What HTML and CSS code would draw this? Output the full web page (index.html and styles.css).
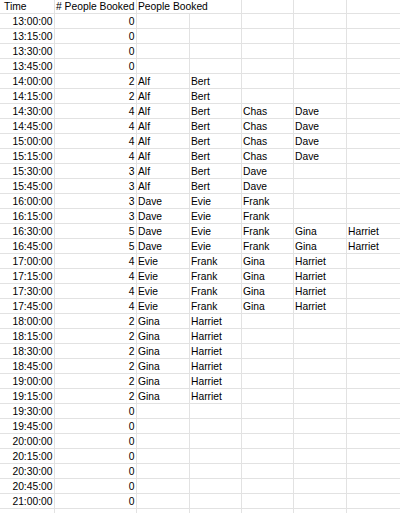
FILE: index.html
```html
<!DOCTYPE html>
<html>
<head>
<meta charset="utf-8">
<link rel="stylesheet" href="styles.css">
</head>
<body>
<table class="sheet">
<thead>
<tr class="head"><th class="l">Time</th><th class="l">&#35; People Booked</th><th class="l span2">People Booked</th><th></th><th></th><th></th></tr>
</thead>
<tbody>
<tr><td>13:00:00</td><td>0</td><td></td><td></td><td></td><td></td><td></td></tr>
<tr><td>13:15:00</td><td>0</td><td></td><td></td><td></td><td></td><td></td></tr>
<tr><td>13:30:00</td><td>0</td><td></td><td></td><td></td><td></td><td></td></tr>
<tr><td>13:45:00</td><td>0</td><td></td><td></td><td></td><td></td><td></td></tr>
<tr><td>14:00:00</td><td>2</td><td>Alf</td><td>Bert</td><td></td><td></td><td></td></tr>
<tr><td>14:15:00</td><td>2</td><td>Alf</td><td>Bert</td><td></td><td></td><td></td></tr>
<tr><td>14:30:00</td><td>4</td><td>Alf</td><td>Bert</td><td>Chas</td><td>Dave</td><td></td></tr>
<tr><td>14:45:00</td><td>4</td><td>Alf</td><td>Bert</td><td>Chas</td><td>Dave</td><td></td></tr>
<tr><td>15:00:00</td><td>4</td><td>Alf</td><td>Bert</td><td>Chas</td><td>Dave</td><td></td></tr>
<tr><td>15:15:00</td><td>4</td><td>Alf</td><td>Bert</td><td>Chas</td><td>Dave</td><td></td></tr>
<tr><td>15:30:00</td><td>3</td><td>Alf</td><td>Bert</td><td>Dave</td><td></td><td></td></tr>
<tr><td>15:45:00</td><td>3</td><td>Alf</td><td>Bert</td><td>Dave</td><td></td><td></td></tr>
<tr><td>16:00:00</td><td>3</td><td>Dave</td><td>Evie</td><td>Frank</td><td></td><td></td></tr>
<tr><td>16:15:00</td><td>3</td><td>Dave</td><td>Evie</td><td>Frank</td><td></td><td></td></tr>
<tr><td>16:30:00</td><td>5</td><td>Dave</td><td>Evie</td><td>Frank</td><td>Gina</td><td>Harriet</td></tr>
<tr><td>16:45:00</td><td>5</td><td>Dave</td><td>Evie</td><td>Frank</td><td>Gina</td><td>Harriet</td></tr>
<tr><td>17:00:00</td><td>4</td><td>Evie</td><td>Frank</td><td>Gina</td><td>Harriet</td><td></td></tr>
<tr><td>17:15:00</td><td>4</td><td>Evie</td><td>Frank</td><td>Gina</td><td>Harriet</td><td></td></tr>
<tr><td>17:30:00</td><td>4</td><td>Evie</td><td>Frank</td><td>Gina</td><td>Harriet</td><td></td></tr>
<tr><td>17:45:00</td><td>4</td><td>Evie</td><td>Frank</td><td>Gina</td><td>Harriet</td><td></td></tr>
<tr><td>18:00:00</td><td>2</td><td>Gina</td><td>Harriet</td><td></td><td></td><td></td></tr>
<tr><td>18:15:00</td><td>2</td><td>Gina</td><td>Harriet</td><td></td><td></td><td></td></tr>
<tr><td>18:30:00</td><td>2</td><td>Gina</td><td>Harriet</td><td></td><td></td><td></td></tr>
<tr><td>18:45:00</td><td>2</td><td>Gina</td><td>Harriet</td><td></td><td></td><td></td></tr>
<tr><td>19:00:00</td><td>2</td><td>Gina</td><td>Harriet</td><td></td><td></td><td></td></tr>
<tr><td>19:15:00</td><td>2</td><td>Gina</td><td>Harriet</td><td></td><td></td><td></td></tr>
<tr><td>19:30:00</td><td>0</td><td></td><td></td><td></td><td></td><td></td></tr>
<tr><td>19:45:00</td><td>0</td><td></td><td></td><td></td><td></td><td></td></tr>
<tr><td>20:00:00</td><td>0</td><td></td><td></td><td></td><td></td><td></td></tr>
<tr><td>20:15:00</td><td>0</td><td></td><td></td><td></td><td></td><td></td></tr>
<tr><td>20:30:00</td><td>0</td><td></td><td></td><td></td><td></td><td></td></tr>
<tr><td>20:45:00</td><td>0</td><td></td><td></td><td></td><td></td><td></td></tr>
<tr><td>21:00:00</td><td>0</td><td></td><td></td><td></td><td></td><td></td></tr>
<tr><td></td><td></td><td></td><td></td><td></td><td></td><td></td></tr>
</tbody>
</table>
</body>
</html>
```
FILE: styles.css
```css
html, body {
  margin: 0;
  padding: 0;
  background: #ffffff;
  overflow: hidden;
}

.sheet {
  display: block;
  border-spacing: 0;
  font-family: "Liberation Sans", Arial, sans-serif;
  font-size: 10.3px;
  color: #000000;
}

.sheet thead,
.sheet tbody {
  display: block;
}

.sheet tr {
  display: grid;
  grid-template-columns: 55px 82px 53px 52px 52px 53px 60px;
}

.sheet th,
.sheet td {
  display: block;
  box-sizing: border-box;
  height: 15px;
  padding: 2px 1px 0 1px;
  line-height: 12px;
  border-right: 1px solid #e2e2e2;
  border-bottom: 1px solid #e2e2e2;
  white-space: nowrap;
  overflow: visible;
  text-align: left;
  font-weight: normal;
}

.sheet td:nth-child(1),
.sheet td:nth-child(2) {
  text-align: right;
  padding-right: 1.5px;
}

.sheet tr > :last-child {
  border-right: none;
}

.sheet .head th {
  height: 14px;
  padding-top: 1px;
}

.sheet .head th:first-child {
  padding-left: 4px;
}

.sheet .head .span2 {
  grid-column: span 2;
}
```
